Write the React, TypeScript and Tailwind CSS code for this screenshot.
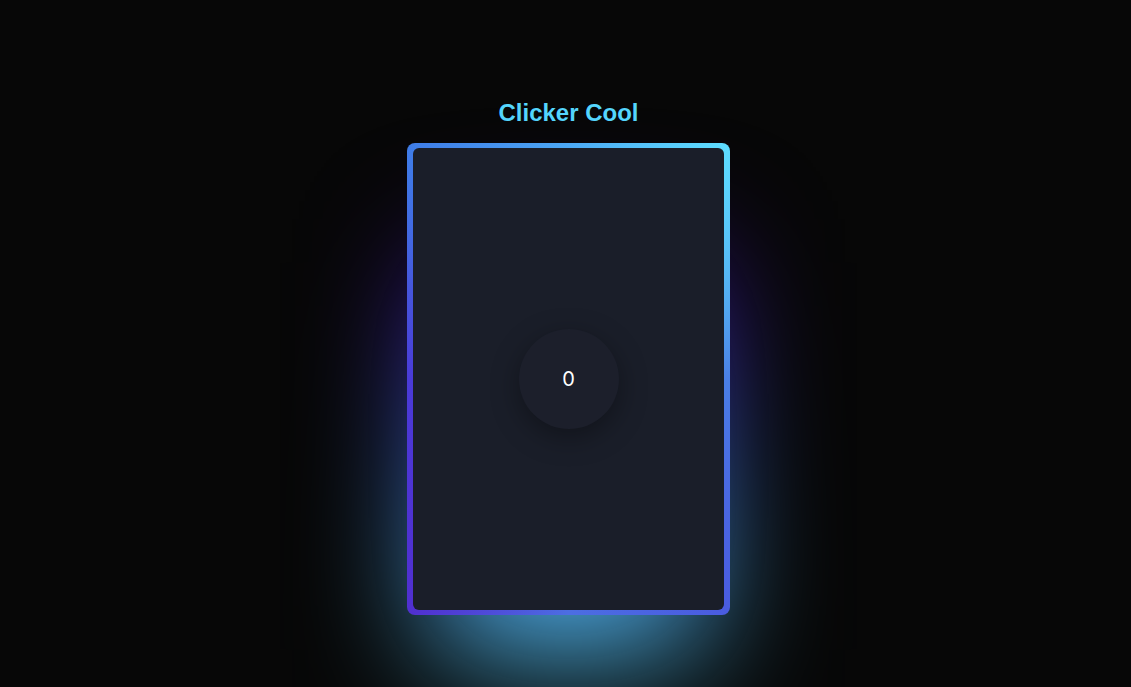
import { useState } from 'react';

export default function App() {
  const [count, setCount] = useState(0);

  return (
    <div className="min-h-screen w-full overflow-hidden bg-[#070707] flex flex-col items-center pt-[97px] pl-[6px] font-['Liberation_Sans',Arial,sans-serif]">
      <h1 className="text-[24px] leading-8 font-bold text-[#55d6fd] mb-[14px]">Clicker Cool</h1>

      <div className="relative">
        {/* glow behind the card */}
        <div className="absolute inset-0 top-[77px] -bottom-[77px] scale-[0.82] blur-[80px] bg-[linear-gradient(180deg,#4e00c2_0%,#3c67e3_45%,#5ddcff_100%)]" />

        <div className="relative rounded-[8px] px-[6px] py-[5px] bg-[conic-gradient(from_0deg,#4ca8f5_0deg,#5ddcff_34deg,#4a7fe6_90deg,#4a5ce0_146deg,#4c6ee2_180deg,#5030d0_214deg,#4a3bd8_270deg,#4656dc_300deg,#3f7de8_326deg,#4ca8f5_360deg)]">
          <div className="w-[311px] h-[462px] rounded-[6px] bg-[#1a1e29] flex items-center justify-center">
            <button
              onClick={() => setCount(count + 1)}
              className="w-[100px] h-[100px] rounded-full bg-[#1c1f2b] shadow-[0_8px_28px_rgba(0,0,0,0.35)] flex items-center justify-center text-white text-[20px] font-['Inter','Noto_Sans',sans-serif]"
            >
              {count}
            </button>
          </div>
        </div>
      </div>
    </div>
  );
}
